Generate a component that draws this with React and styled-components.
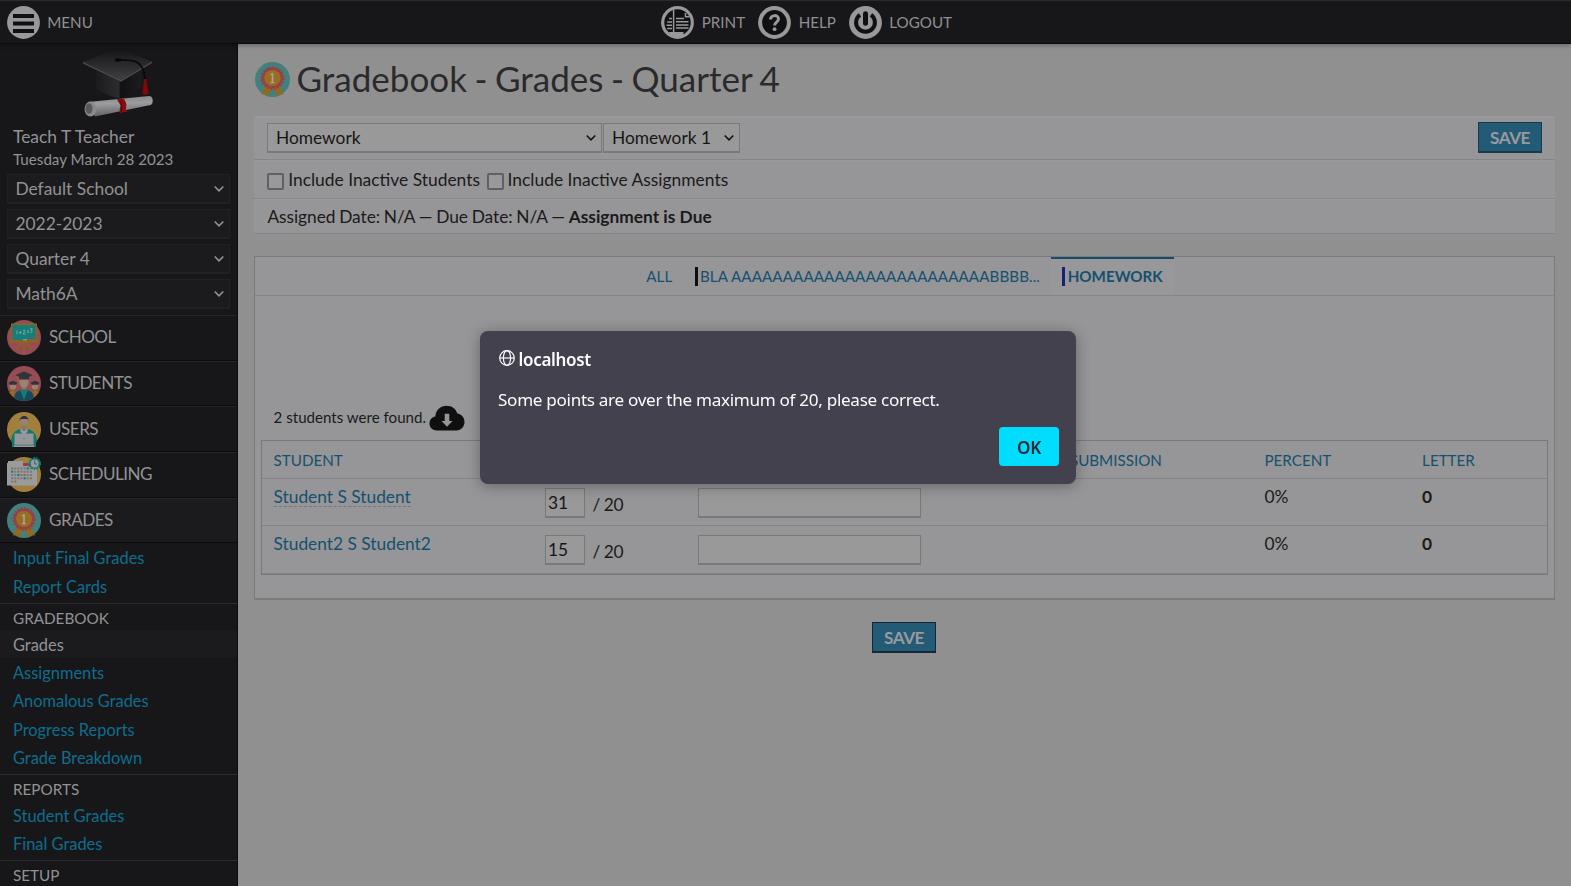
import React from 'react';
import styled, { createGlobalStyle, css } from 'styled-components';

const Global = createGlobalStyle`
  *, *::before, *::after { box-sizing: border-box; }
  html, body { margin: 0; padding: 0; height: 100%; overflow: hidden; }
  body {
    font-family: Lato, "Liberation Sans", sans-serif;
    font-size: 17.33px;
    color: #1a1a1b;
    background: #909091;
  }
`;

const Page = styled.div`
  display: flex;
  flex-direction: column;
  width: 1571px;
  height: 886px;
  overflow: hidden;
`;

const TopBar = styled.header`
  display: grid;
  grid-template-columns: 661px auto 1fr;
  align-items: center;
  flex: none;
  height: 44px;
  background: #171719;
  border-top: 1px solid #2b2b2d;
  border-bottom: 1px solid #0b0b0c;
  box-shadow: 0 1px 5px rgba(0, 0, 0, 0.35);
  z-index: 1;
`;

const TopGroup = styled.nav`
  display: flex;
  align-items: center;
  padding-left: ${(p) => p.$inset || 0}px;
`;

const TopLink = styled.a`
  display: flex;
  align-items: center;
  gap: 7.7px;
  width: ${(p) => p.$width}px;
  font-size: 15.2px;
  line-height: 20px;
  color: #8f8f92;
  white-space: nowrap;
  svg { flex: none; }
`;

const Body = styled.div`
  display: flex;
  flex: 1;
  min-height: 0;
`;

const Sidebar = styled.aside`
  flex: none;
  width: 238px;
  height: 842px;
  overflow: hidden;
  background: #171719;
  border-right: 1px solid #0b0b0c;
  color: #929294;
`;

const Logo = styled.div`
  height: 78px;
  padding: 3px 0 0 82px;
`;

const UserName = styled.div`
  height: 26px;
  padding-left: 13px;
  font-size: 17.45px;
  line-height: 30px;
`;

const Today = styled.div`
  height: 26px;
  padding-left: 13px;
  font-size: 15.17px;
  line-height: 22px;
`;

const Selects = styled.div`
  display: flex;
  flex-direction: column;
  gap: 5px;
  height: 141px;
  padding: 0 7px;
`;

const SideSelect = styled.div`
  display: flex;
  align-items: center;
  justify-content: space-between;
  height: 30px;
  padding: 0 4px 0 7.4px;
  background: #1b1b1d;
  border: 1px solid #212123;
  border-bottom-width: 2px;
  font-size: 17.4px;
`;

const MenuItem = styled.a`
  display: flex;
  align-items: center;
  gap: 8px;
  height: 45.65px;
  padding: 0 7px 2px;
  border-top: 1px solid #262628;
  border-bottom: 1px solid #0b0b0c;
  background: ${(p) => (p.$open ? '#1b1b1d' : 'transparent')};
  font-size: 17.1px;
  letter-spacing: -0.52px;
  svg { flex: none; margin-top: 2px; }
`;

const SubList = styled.div`
  padding-bottom: ${(p) => p.$bottom || 2.5}px;
`;

const SubHeading = styled.div`
  height: 26.6px;
  padding-left: 13px;
  border-top: 1px solid #2d2d2f;
  font-size: 15.25px;
  line-height: 29px;
`;

const SubLink = styled.a`
  display: block;
  height: 28.4px;
  padding-left: 13px;
  font-size: 16.42px;
  line-height: 29px;
  color: ${(p) => (p.$current ? '#929294' : '#0f6d8e')};
  background: ${(p) => (p.$current ? '#1b1b1d' : 'transparent')};
`;

const Main = styled.main`
  flex: 1;
  min-width: 0;
  padding: 18px 16px 0;
  background: #909091;
`;

const Title = styled.h1`
  display: flex;
  align-items: center;
  gap: 6.5px;
  height: 35px;
  margin: 0 0 19px;
  padding-left: 1px;
  font-size: 35.05px;
  font-weight: 400;
  line-height: 33px;
  word-spacing: -1.5px;
  color: #2a2a2c;
  span { height: 35px; }
`;

const FilterPanel = styled.section`
  margin-bottom: 22px;
  background: #969698;
`;

const FilterRow = styled.div`
  display: flex;
  align-items: center;
  height: ${(p) => p.$height}px;
  padding: 0 13px;
  border-bottom: 1px solid #868688;
  box-shadow: inset 0 1px 0 #9a9a9b;
  white-space: pre;
`;

const DueInfo = styled.span`
  padding-left: 0.4px;
  letter-spacing: -0.05px;
  word-spacing: -0.6px;
  b { letter-spacing: 0; word-spacing: 0; }
`;

const Spacer = styled.div`
  flex: 1;
`;

const Select = styled.div`
  display: flex;
  align-items: center;
  justify-content: space-between;
  width: ${(p) => p.$width}px;
  height: 30px;
  margin-right: 1px;
  padding: 0 4px 0 8px;
  background: #999999;
  border: 1px solid #79797b;
  border-bottom-width: 2px;
  font-size: 17.33px;
  color: #151516;
  svg { margin-top: 1px; }
`;

const CheckLabel = styled.label`
  display: flex;
  align-items: center;
  gap: 3.8px;
  margin-right: 6.4px;
  font-size: 17.42px;
`;

const Checkbox = styled.span`
  width: 17px;
  height: 17px;
  margin: 4px 0 0 0.4px;
  border: 2px solid #5f5e69;
  border-radius: 2px;
  background: #999999;
`;

const SaveButton = styled.button`
  width: 64px;
  height: 31px;
  padding: 1px 0 0;
  border: 1px solid ${(p) => (p.$dark ? '#142638' : '#173a4b')};
  border-bottom-width: 2px;
  border-radius: 0;
  background: #235a76;
  color: #9a9a9d;
  font: 700 17.2px/27px Lato, sans-serif;
  letter-spacing: -0.5px;
`;

const Tabbed = styled.section`
  height: 344px;
  margin-bottom: 22px;
  background: #969698;
  border: 1px solid #7b7b7d;
  border-bottom-width: 2px;
`;

const Tabs = styled.div`
  display: flex;
  justify-content: center;
  height: 39px;
  border-bottom: 1px solid #868688;
`;

const Tab = styled.a`
  display: flex;
  align-items: center;
  height: 38px;
  padding: 0 11.2px 2px;
  border-top: 2px solid ${(p) => (p.$active ? '#174c68' : 'transparent')};
  background: ${(p) => (p.$active ? '#98989a' : 'transparent')};
  color: #15506f;
  font-size: 15.17px;
  font-weight: ${(p) => (p.$active ? 700 : 400)};
  letter-spacing: ${(p) => (p.$active ? 0 : 0.08)}px;
`;

const Swatch = styled.span`
  width: 3px;
  height: 19px;
  margin: 1px 2.3px 0 0;
  background: ${(p) => p.$color};
`;

const Found = styled.div`
  display: flex;
  align-items: flex-end;
  gap: 3px;
  height: 144px;
  padding: 0 0 9px 18.6px;
  font-size: 15.1px;
  line-height: 27px;
`;

const Table = styled.div`
  margin: 0 6px;
  border: 1px solid #79797b;
  box-shadow: inset 0 -1px 0 #858587;
`;

const columns = css`
  display: grid;
  grid-template-columns: 271px 153px 372.4px 194.6px 157.6px 1fr;
`;

const HeadRow = styled.div`
  ${columns}
  height: 38px;
  border-bottom: 1px solid #848486;
  font-size: 15.2px;
  line-height: 39px;
  color: #15506f;
`;

const Row = styled.div`
  ${columns}
  height: ${(p) => (p.$last ? 48 : 47)}px;
  border-bottom: ${(p) => (p.$last ? 0 : 1)}px solid #848486;
`;

const Cell = styled.div`
  padding-left: 11.5px;
  line-height: ${(p) => (p.$head ? 39 : 36)}px;
  font-weight: ${(p) => (p.$bold ? 700 : 400)};
`;

const StudentLink = styled.a`
  display: inline-block;
  font-size: 17.33px;
  line-height: 27px;
  margin-top: 4px;
  height: 24px;
  color: #15506f;
  border-bottom: ${(p) => (p.$tip ? '1px dashed #77777a' : '0')};
`;

const Points = styled.div`
  display: flex;
  gap: 7.6px;
  padding: 9px 0 0 12px;
  line-height: 33px;
  font-size: 17.33px;
  letter-spacing: -0.5px;
`;

const Input = styled.input`
  width: ${(p) => p.$width}px;
  height: 30px;
  padding: 0 2px;
  background: #999999;
  border: 1px solid #79797b;
  border-bottom-width: 2px;
  border-radius: 0;
  color: #151516;
  font: 17.33px Lato, sans-serif;
  outline: 0;
`;

const CommentCell = styled.div`
  padding: 9px 0 0 12px;
`;

const Footer = styled.div`
  display: flex;
  justify-content: center;
  padding-right: 1px;
`;

const Dialog = styled.div`
  position: fixed;
  left: 480px;
  top: 331px;
  z-index: 5;
  display: flex;
  flex-direction: column;
  width: 596px;
  height: 153px;
  padding: 16px 17px 18px 18px;
  border-radius: 8px;
  background: #42414d;
  box-shadow: 0 2px 14px rgba(20, 20, 26, 0.36);
  color: #fbfbfe;
  font-family: "Noto Sans", sans-serif;
`;

const Origin = styled.div`
  display: flex;
  align-items: center;
  gap: 4px;
  height: 23px;
  padding: 1px 0 0 0.6px;
  font-size: 17px;
  font-weight: 600;
  letter-spacing: -0.33px;
  svg { margin-bottom: 2px; }
`;

const Message = styled.p`
  margin: 17px 0 15px;
  font-size: 17.1px;
  line-height: 25px;
  letter-spacing: -0.3px;
`;

const OkButton = styled.button`
  align-self: flex-end;
  width: 60px;
  height: 39px;
  padding: 1px 0 0;
  border: 0;
  border-radius: 4px;
  background: #00ddff;
  color: #2b2a33;
  font: 600 17.1px "Noto Sans", sans-serif;
  letter-spacing: -0.3px;
`;

const Chevron = ({ color }) => (
  <svg width="12" height="8" viewBox="0 0 12 8" fill="none" stroke={color} strokeWidth="1.7">
    <path d="M1.7 1.5 6 5.8 10.3 1.5" />
  </svg>
);

const RoundIcon = ({ children }) => (
  <svg width="33" height="33" viewBox="0 0 33 33">
    <circle cx="16.5" cy="16.5" r="16.4" fill="#98989b" />
    {children}
  </svg>
);

const MenuIcon = () => (
  <RoundIcon>
    <path d="M6 8h21v4H6zM6 15.6h21v4H6zM6 23h21v4H6z" fill="#101012" />
  </RoundIcon>
);

const PrintIcon = () => (
  <RoundIcon>
    <circle cx="16.5" cy="16.5" r="13.2" fill="#101012" />
    <path
      d="M12.6 4V26M24.5 7v3.7h4M6.2 16H11M5.5 19.2H11M6.2 22.4H11M8 12.5h3M15 12.5h8M15 15.7h12.5M15 18.9h12.5M15 22.1h12.5"
      fill="none"
      stroke="#98989b"
      strokeWidth="1.5"
    />
    <path d="M8 26h14.5v4.5h-13z" fill="#98989b" />
  </RoundIcon>
);

const HelpIcon = () => (
  <RoundIcon>
    <circle cx="16.5" cy="16.5" r="12.4" fill="#101012" />
    <path
      d="M12.5 13.6c0-5.2 8-5.2 8-.6 0 3-3.9 3.1-3.9 6.4"
      fill="none"
      stroke="#98989b"
      strokeWidth="3"
    />
    <circle cx="16.6" cy="23.2" r="1.9" fill="#98989b" />
  </RoundIcon>
);

const LogoutIcon = () => (
  <RoundIcon>
    <path d="M11 8.8a9.4 9.4 0 1 0 11 0" fill="none" stroke="#101012" strokeWidth="4" />
    <path d="M16.5 7.8v9.4" stroke="#101012" strokeWidth="5" strokeLinecap="round" />
  </RoundIcon>
);

const CapLogo = () => (
  <svg width="72" height="72" viewBox="0 0 72 72">
    <defs>
      <linearGradient id="board" x1="0" y1="0" x2="0" y2="1">
        <stop offset="0" stopColor="#141415" />
        <stop offset="0.6" stopColor="#2e2e30" />
        <stop offset="1" stopColor="#404042" />
      </linearGradient>
      <linearGradient id="skull" x1="0" y1="0" x2="1" y2="0">
        <stop offset="0" stopColor="#1b1b1d" />
        <stop offset="0.5" stopColor="#2b2b2d" />
        <stop offset="0.55" stopColor="#111113" />
        <stop offset="1" stopColor="#1c1c1e" />
      </linearGradient>
      <linearGradient id="roll" x1="0" y1="0" x2="0.1" y2="1">
        <stop offset="0" stopColor="#828285" />
        <stop offset="0.4" stopColor="#9d9da0" />
        <stop offset="1" stopColor="#626265" />
      </linearGradient>
    </defs>
    <path d="M14 24v17c5 5 15 8 25 11 8-3 15-7 20-12V21L39 33z" fill="url(#skull)" />
    <path d="M1 15 36 1l34 13.5L39 33z" fill="url(#board)" />
    <path d="M1 15 39 33 70 14.5v1.4L39 34.8 1 16.4z" fill="#4b4b4d" />
    <ellipse cx="36" cy="13" rx="3.2" ry="1.7" fill="#060607" />
    <path d="M36 13c15-.5 26 0 27 19" fill="none" stroke="#08080a" strokeWidth="1.6" />
    <path d="M62 32h2.3l2.2 14.3c-1.5 2-5 2-6 .1z" fill="#84070a" />
    <path d="M6 55 67 49c5 0 4.500 8.500 1.500 9L13 69.500z" fill="url(#roll)" />
    <ellipse cx="8.5" cy="62" rx="6" ry="7.4" fill="#8a8a8d" />
    <ellipse cx="7" cy="61.5" rx="3.6" ry="5.2" fill="#5a5a5d" />
    <path d="M35 52.5c3-1.5 5-1.3 7.5 0l2 5-.8 5 2 2.4-4 .2-3.4 1.4-.7-4 1-4z" fill="#850c10" />
    <path d="M38 54.5c2 3 2 6 1.2 10" fill="none" stroke="#4d0609" strokeWidth="1" />
  </svg>
);

const SchoolIcon = () => (
  <svg width="34" height="35" viewBox="0 0 34 35">
    <ellipse cx="17" cy="17.5" rx="17" ry="17.5" fill="#974b54" />
    <path d="M16 21 8.5 30M18 21l7.5 9M17 21v13" stroke="#8d6520" strokeWidth="1.7" />
    <path d="M4 3.500h26V21H4z" fill="#8d6520" />
    <path d="M5.500 5h23v15h-23z" fill="#167d78" />
    <path d="M3 20.800h28v1.700H3z" fill="#8d6520" />
    <path
      d="M10 10.500v4M12 12.500h2.600M13.300 11.200v2.600M16 10.500c2-1 2.500.5 1.500 1.500l-1.500 2h2.500M20 10.800h2M20 12.300h2M23.300 8.700h2l-1.300 1.600c2 .2 1.300 2.600-.9 2"
      fill="none"
      stroke="#8fb3b1"
      strokeWidth="0.8"
    />
    <path d="M21 18.800h7v1.200h-7z" fill="#974b54" />
    <path d="M16 19.200h4v1h-4z" fill="#a0a1a3" />
  </svg>
);

const StudentsIcon = () => (
  <svg width="34" height="35" viewBox="0 0 34 35">
    <clipPath id="students-disc"><ellipse cx="17" cy="17.5" rx="17" ry="17.5" /></clipPath>
    <g clipPath="url(#students-disc)">
      <path d="M0 0h34v35H0z" fill="#974b54" />
      <path d="M0 35v-8l6-2.500 6 2.500v8zM22 35v-8l6-2.500 6 2.500v8z" fill="#956c20" />
      <circle cx="6" cy="20.5" r="3.3" fill="#9b8270" />
      <circle cx="28" cy="20.5" r="3.3" fill="#9b8270" />
      <path d="m1.500 16.800 4.500-2 4.500 2-1.500 2H3zM23.500 16.800l4.500-2 4.500 2-1.500 2h-6z" fill="#30343b" />
      <path d="M7 35c0-8 1-9 7-11h6c6 2 7 3 7 11z" fill="#174b5b" />
      <path d="m14 22 3 3 3-3 .5 3-3.500 9-3.500-9z" fill="#1a7c78" />
      <path d="M14.500 18h5v4.500l-2.500 2-2.500-2z" fill="#88715f" />
      <path d="M12.500 12h9v5c0 3-2.800 4.700-4.500 4.700s-4.500-1.700-4.500-4.700z" fill="#9b8270" />
      <path d="m8.500 9 8.500-3.500L25.500 9l-3.500 2v2.500H12V11z" fill="#30343b" />
      <path d="M11 10.500v6" stroke="#956c20" strokeWidth="0.9" />
    </g>
  </svg>
);

const UsersIcon = () => (
  <svg width="34" height="35" viewBox="0 0 34 35">
    <clipPath id="users-disc"><path d="M17 0a17 17.5 0 0 1 12 30v5H5v-5A17 17.5 0 0 1 17 0z" /></clipPath>
    <ellipse cx="17" cy="17.5" rx="17" ry="17.5" fill="#a0803c" />
    <g clipPath="url(#users-disc)">
      <path d="M4 31c0-9 3-12 9-14h8c6 2 9 5 9 14v4H4z" fill="#13776f" />
      <path d="m13.500 16 3.500 3 3.500-3v4l-3.500 3-3.500-3z" fill="#9a9b9d" />
      <path d="M14.500 13h5v4L17 19l-2.500-2z" fill="#8c7462" />
      <circle cx="17" cy="9.5" r="4" fill="#9b8270" />
      <path d="M12.700 9c-.6-6 9.200-7 8.700 0l-1-2h-6.500z" fill="#30333a" />
      <path d="M7.500 21.500h19V33h-19z" fill="#96979a" />
      <path d="M7 32.500h20v1H7z" fill="#617e80" />
      <path d="M7 33.500h20V35H7z" fill="#96979a" />
      <path d="M16 26.500h2" stroke="#77787b" />
    </g>
  </svg>
);

const SchedulingIcon = () => {
  const dots = [];
  for (let r = 0; r < 5; r += 1) {
    for (let c = 0; c < (r === 4 ? 2 : 7); c += 1) {
      const k = (r * 3 + c * 2) % 7;
      const fill = k === 0 ? '#956c20' : k === 3 ? '#13776f' : '#77797c';
      dots.push(<rect key={`${r}-${c}`} x={4.2 + c * 3.1} y={10.4 + r * 3.3} width="2" height="2" fill={fill} />);
    }
  }
  return (
    <svg width="34" height="35" viewBox="0 0 34 35">
      <ellipse cx="17" cy="17.5" rx="17" ry="17.5" fill="#a0803c" />
      <path d="M0 6h1V4h15v5h14v19.500H0z" fill="#9a9b9e" />
      <path d="M16 6h10v3H16z" fill="#97403f" />
      {dots}
      <circle cx="27.7" cy="6.5" r="5.4" fill="none" stroke="#167d78" strokeWidth="2" strokeDasharray="1.6 1" />
      <circle cx="27.7" cy="6.5" r="4.6" fill="#9a9b9e" stroke="#167d78" strokeWidth="1.4" />
      <path d="M27.700 3.500v3.500h2.500" fill="none" stroke="#4c5458" strokeWidth="0.9" />
    </svg>
  );
};

const GradesIcon = ({ width = 34 }) => (
  <svg width={width} height="35" viewBox="0 0 34 35" preserveAspectRatio="none">
    <ellipse cx="17" cy="17.5" rx="17" ry="17.5" fill="#42807d" />
    <path d="M10.500 23 6 32.500l4-.5 2 2.500 4.500-8zM23.500 23l4.500 9.500-4-.5-2 2.500-4.500-8z" fill="#94681d" />
    <circle cx="17" cy="16" r="10.6" fill="none" stroke="#983f49" strokeWidth="2" strokeDasharray="2.1 1.2" />
    <circle cx="17" cy="16" r="10.2" fill="#983f49" />
    <circle cx="17" cy="16" r="8" fill="#9a6d22" />
    <path d="m14.800 12.300 2-1.400h1V20h1.200v1.200h-4V20h1.200v-7.300l-1.400.7z" fill="#a5a29d" />
  </svg>
);

const CloudIcon = () => (
  <svg width="36" height="26" viewBox="0 0 36 26">
    <path
      d="M8 25.500C3.500 25.500.500 22.300.500 18.500c0-3.700 2.500-6.300 5.800-7C6.800 5 11.500.8 17.500.8c5 0 9.200 2.700 10.700 7.600 4.300.5 7.300 4 7.300 8.600 0 4.700-3.500 8.500-8 8.500z"
      fill="#0f0f10"
    />
    <path d="M15.700 8.800h4.600v7.200h3.200L18 21.700l-5.500-5.700h3.200z" fill="#969698" />
  </svg>
);

const GlobeIcon = () => (
  <svg width="16" height="16" viewBox="0 0 16 16" fill="none" stroke="#fbfbfe" strokeWidth="1.2">
    <circle cx="8" cy="8" r="7.3" />
    <ellipse cx="8" cy="8" rx="3.6" ry="7.3" />
    <path d="M.8 8h14.4" />
  </svg>
);

const modules = [
  ['SCHOOL', SchoolIcon],
  ['STUDENTS', StudentsIcon],
  ['USERS', UsersIcon],
  ['SCHEDULING', SchedulingIcon],
  ['GRADES', GradesIcon],
];

const students = [
  { name: 'Student S Student', points: '31', tip: true },
  { name: 'Student2 S Student2', points: '15', tip: false },
];

export default function App() {
  return (
    <Page>
      <Global />
      <TopBar>
        <TopGroup $inset={6.5}>
          <TopLink $width={120}><MenuIcon />MENU</TopLink>
        </TopGroup>
        <TopGroup>
          <TopLink $width={97}><PrintIcon />PRINT</TopLink>
          <TopLink $width={90.5}><HelpIcon />HELP</TopLink>
          <TopLink $width={110}><LogoutIcon />LOGOUT</TopLink>
        </TopGroup>
      </TopBar>
      <Body>
        <Sidebar>
          <Logo><CapLogo /></Logo>
          <UserName>Teach T Teacher</UserName>
          <Today>Tuesday March 28 2023</Today>
          <Selects>
            {['Default School', '2022-2023', 'Quarter 4', 'Math6A'].map((label) => (
              <SideSelect key={label}>{label}<Chevron color="#929294" /></SideSelect>
            ))}
          </Selects>
          {modules.map(([label, Icon]) => (
            <MenuItem key={label} $open={label === 'GRADES'}><Icon />{label}</MenuItem>
          ))}
          <SubList $bottom={3}>
            <SubLink>Input Final Grades</SubLink>
            <SubLink>Report Cards</SubLink>
          </SubList>
          <SubHeading>GRADEBOOK</SubHeading>
          <SubList>
            <SubLink $current>Grades</SubLink>
            <SubLink>Assignments</SubLink>
            <SubLink>Anomalous Grades</SubLink>
            <SubLink>Progress Reports</SubLink>
            <SubLink>Grade Breakdown</SubLink>
          </SubList>
          <SubHeading>REPORTS</SubHeading>
          <SubList>
            <SubLink>Student Grades</SubLink>
            <SubLink>Final Grades</SubLink>
          </SubList>
          <SubHeading>SETUP</SubHeading>
        </Sidebar>
        <Main>
          <Title><GradesIcon width={35} /><span>Gradebook - Grades - Quarter 4</span></Title>
          <FilterPanel>
            <FilterRow $height={44}>
              <Select $width={335}>Homework<Chevron color="#151516" /></Select>
              <Select $width={137}>Homework 1<Chevron color="#151516" /></Select>
              <Spacer />
              <SaveButton>SAVE</SaveButton>
            </FilterRow>
            <FilterRow $height={39}>
              <CheckLabel><Checkbox />Include Inactive Students</CheckLabel>
              <CheckLabel><Checkbox />Include Inactive Assignments</CheckLabel>
            </FilterRow>
            <FilterRow $height={35}>
              <DueInfo>Assigned Date: N/A — Due Date: N/A — <b>Assignment is Due</b></DueInfo>
            </FilterRow>
          </FilterPanel>
          <Tabbed>
            <Tabs>
              <Tab>ALL</Tab>
              <Tab><Swatch $color="#0e0e10" />BLA AAAAAAAAAAAAAAAAAAAAAAAAABBBB...</Tab>
              <Tab $active><Swatch $color="#14207a" />HOMEWORK</Tab>
            </Tabs>
            <Found>2 students were found.<CloudIcon /></Found>
            <Table>
              <HeadRow>
                <Cell $head>STUDENT</Cell>
                <Cell $head />
                <Cell $head />
                <Cell $head>SUBMISSION</Cell>
                <Cell $head>PERCENT</Cell>
                <Cell $head>LETTER</Cell>
              </HeadRow>
              {students.map((s, i) => (
                <Row key={s.name} $last={i === students.length - 1}>
                  <Cell><StudentLink $tip={s.tip}>{s.name}</StudentLink></Cell>
                  <Points><Input $width={40} defaultValue={s.points} /><span>/ 20</span></Points>
                  <CommentCell><Input $width={223} /></CommentCell>
                  <Cell />
                  <Cell>0%</Cell>
                  <Cell $bold>0</Cell>
                </Row>
              ))}
            </Table>
          </Tabbed>
          <Footer><SaveButton $dark>SAVE</SaveButton></Footer>
        </Main>
      </Body>
      <Dialog role="alertdialog">
        <Origin><GlobeIcon />localhost</Origin>
        <Message>Some points are over the maximum of 20, please correct.</Message>
        <OkButton>OK</OkButton>
      </Dialog>
    </Page>
  );
}
